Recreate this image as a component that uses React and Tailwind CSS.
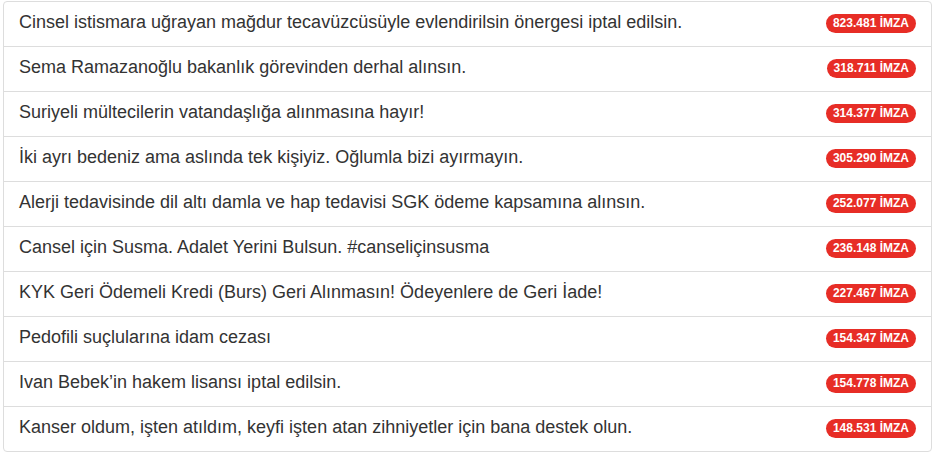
import React from 'react';

const petitions = [
  { title: 'Cinsel istismara uğrayan mağdur tecavüzcüsüyle evlendirilsin önergesi iptal edilsin.', count: '823.481' },
  { title: 'Sema Ramazanoğlu bakanlık görevinden derhal alınsın.', count: '318.711' },
  { title: 'Suriyeli mültecilerin vatandaşlığa alınmasına hayır!', count: '314.377' },
  { title: 'İki ayrı bedeniz ama aslında tek kişiyiz. Oğlumla bizi ayırmayın.', count: '305.290' },
  { title: 'Alerji tedavisinde dil altı damla ve hap tedavisi SGK ödeme kapsamına alınsın.', count: '252.077' },
  { title: 'Cansel için Susma. Adalet Yerini Bulsun. #canseliçinsusma', count: '236.148' },
  { title: 'KYK Geri Ödemeli Kredi (Burs) Geri Alınmasın! Ödeyenlere de Geri İade!', count: '227.467' },
  { title: 'Pedofili suçlularına idam cezası', count: '154.347' },
  { title: 'Ivan Bebek’in hakem lisansı iptal edilsin.', count: '154.778' },
  { title: 'Kanser oldum, işten atıldım, keyfi işten atan zihniyetler için bana destek olun.', count: '148.531' },
];

export default function App() {
  return (
    <div className="min-h-screen bg-white pt-px pl-[3px] font-['Liberation_Sans',Arial,sans-serif] text-[#333]">
      <ul className="w-[929px]">
        {petitions.map((p, i) => (
          <li
            key={i}
            className={`-mb-px flex items-center justify-between border border-[#ddd] px-[15px] pt-[9px] pb-[11px] text-[18px] ${
              i === 0 ? 'rounded-t' : ''
            } ${i === petitions.length - 1 ? 'mb-0 rounded-b' : ''}`}
          >
            <a href="#" className="block pb-[2px] leading-[22px] text-[#333]">{p.title}</a>
            <span className="rounded-[10px] bg-[#e72d26] px-[7px] py-[3px] text-xs font-bold leading-[13px] text-white">
              {p.count} İMZA
            </span>
          </li>
        ))}
      </ul>
    </div>
  );
}
